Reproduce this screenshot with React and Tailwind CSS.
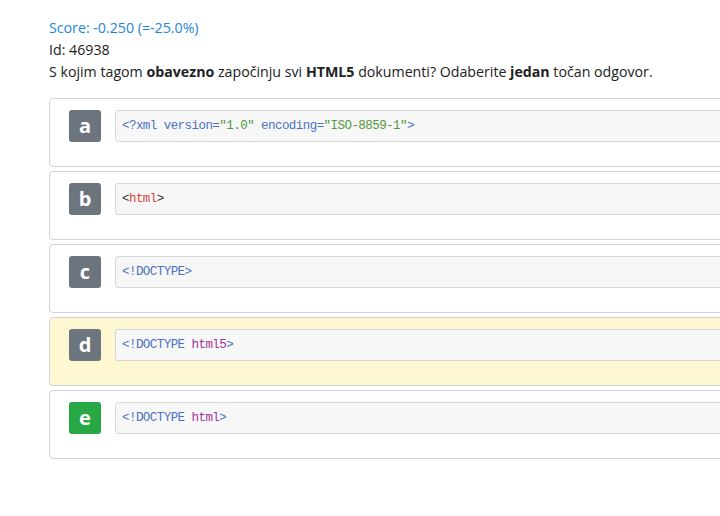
import React from 'react';

const answers = [
  {
    letter: 'a',
    code: (
      <>
        <span className="text-[#4a72c4]">&lt;?xml version=</span>
        <span className="text-[#4f9a3a]">"1.0"</span>
        <span className="text-[#4a72c4]"> encoding=</span>
        <span className="text-[#4f9a3a]">"ISO-8859-1"</span>
        <span className="text-[#4a72c4]">&gt;</span>
      </>
    ),
  },
  {
    letter: 'b',
    code: (
      <>
        <span className="text-[#333]">&lt;</span>
        <span className="text-[#d4463b]">html</span>
        <span className="text-[#333]">&gt;</span>
      </>
    ),
  },
  {
    letter: 'c',
    code: <span className="text-[#4a72c4]">&lt;!DOCTYPE&gt;</span>,
  },
  {
    letter: 'd',
    selected: true,
    code: (
      <>
        <span className="text-[#4a72c4]">&lt;!DOCTYPE </span>
        <span className="text-[#a0329a]">html5</span>
        <span className="text-[#4a72c4]">&gt;</span>
      </>
    ),
  },
  {
    letter: 'e',
    correct: true,
    code: (
      <>
        <span className="text-[#4a72c4]">&lt;!DOCTYPE </span>
        <span className="text-[#a0329a]">html</span>
        <span className="text-[#4a72c4]">&gt;</span>
      </>
    ),
  },
];

export default function App() {
  return (
    <div className="w-[720px] h-[516px] overflow-hidden bg-white" style={{ fontFamily: '"Open Sans", "Noto Sans", sans-serif' }}>
      <div className="pl-[49px] pt-[17px] w-[760px]">
        {/* header */}
        <div className="text-[14.2px] leading-[22px] text-[#222]">
          <div className="text-[#1b86d8]">Score: -0.250 (=-25.0%)</div>
          <div>Id: 46938</div>
          <div>
            S kojim tagom <b>obavezno</b> započinju svi <b>HTML5</b> dokumenti? Odaberite <b>jedan</b> točan odgovor.
          </div>
        </div>

        {/* answers */}
        <div className="mt-[15px] flex flex-col gap-[4px]">
          {answers.map((a) => (
            <div
              key={a.letter}
              className={`h-[69px] border border-[#d2d2d2] rounded-l-[4px] pl-[19px] pt-[11px] flex items-start gap-[14px] ${a.selected ? 'bg-[#fdf8d2]' : 'bg-white'}`}
            >
              <div
                className={`w-[32px] h-[32px] shrink-0 rounded-[3px] flex items-center justify-center text-white text-[20px] font-bold ${a.correct ? 'bg-[#28a745]' : 'bg-[#6c757d]'}`}
              >
                {a.letter}
              </div>
              <div
                className="flex-1 h-[32px] bg-[#f7f7f7] border border-[#d6d6d6] rounded-l-[3px] pl-[6px] flex items-center text-[12.5px] tracking-[-0.55px]"
                style={{ fontFamily: '"Liberation Mono", monospace' }}
              >
                <span className="whitespace-pre">{a.code}</span>
              </div>
            </div>
          ))}
        </div>
      </div>
    </div>
  );
}
